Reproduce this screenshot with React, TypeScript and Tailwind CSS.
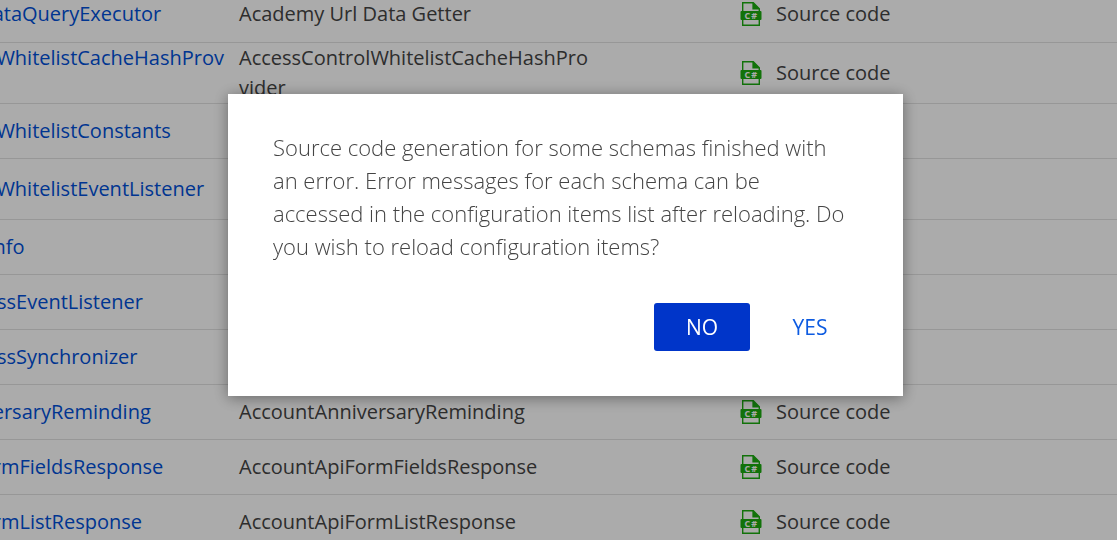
type Schema = { name: string; title: string };

const schemas: Schema[] = [
  { name: "AcademyUrlDataQueryExecutor", title: "Academy Url Data Getter" },
  { name: "AccessControlWhitelistCacheHashProvider", title: "AccessControlWhitelistCacheHashProvider" },
  { name: "AccessControlWhitelistConstants", title: "AccessControlWhitelistConstants" },
  { name: "AccessControlWhitelistEventListener", title: "Access Control Whitelist Event Listener" },
  { name: "AccessObjectInfo", title: "AccessObjectInfo" },
  { name: "AccountAddressEventListener", title: "AccountAddressEventListener" },
  { name: "AccountAddressSynchronizer", title: "AccountAddressSynchronizer" },
  { name: "AccountAnniversaryReminding", title: "AccountAnniversaryReminding" },
  { name: "AccountApiFormFieldsResponse", title: "AccountApiFormFieldsResponse" },
  { name: "AccountApiFormListResponse", title: "AccountApiFormListResponse" },
];

function CSharpFileIcon() {
  return (
    <svg viewBox="0 0 22 24" className="h-6 w-[22px] shrink-0" aria-hidden="true">
      <path d="M2.7 0.7h10.6l6 6v16.6H2.7z" fill="none" stroke="#1bab10" strokeWidth="1.4" />
      <path d="M12.4 0L20 7.6h-7.6z" fill="#1bab10" />
      <rect x="0.5" y="9" width="21" height="9" rx="1" fill="#1bab10" />
      <g fontSize="9" fontWeight="700" fill="#fff" fontFamily="Open Sans, sans-serif">
        <text x="4.6" y="16.8">C</text>
        <text x="11.2" y="16.8">#</text>
      </g>
    </svg>
  );
}

function SchemaTable() {
  return (
    <table className="-mt-[13px] -ml-[139px] w-[calc(100%+139px)] table-fixed border-collapse text-[20px] leading-[30px] text-[#444444]">
      <colgroup>
        <col className="w-[367px]" />
        <col className="w-[501px]" />
        <col />
      </colgroup>
      <tbody>
        {schemas.map((schema) => (
          <tr key={schema.name} className="h-[55px] border-b border-[#e2e2e2]">
            <td className="py-0 pr-1 pl-1 break-all">
              <a href="#schema" className="text-[#0050d8]">{schema.name}</a>
            </td>
            <td className="py-0 pr-[138px] pl-[11px] break-all">{schema.title}</td>
            <td className="py-0 pl-[11px]">
              <div className="flex items-center gap-3.5">
                <CSharpFileIcon />
                <span>Source code</span>
              </div>
            </td>
          </tr>
        ))}
      </tbody>
    </table>
  );
}

export default function App() {
  return (
    <div className="h-screen overflow-hidden bg-white font-['Open_Sans',sans-serif]">
      <SchemaTable />
      <div className="fixed inset-0 flex items-start justify-center bg-black/33 pt-[94px] pl-3.5">
        <div
          role="dialog"
          aria-modal="true"
          aria-describedby="dialog-message"
          className="w-full max-w-[675px] bg-white px-[45px] pt-[37px] pb-[45px] shadow-[0_2px_14px_rgba(0,0,0,0.4)]"
        >
          <p id="dialog-message" className="pr-2 text-[22px] leading-[33px] font-light text-[#444444]">
            Source code generation for some schemas finished with an error. Error messages for each schema can be
            accessed in the configuration items list after reloading. Do you wish to reload configuration items?
          </p>
          <div className="mt-10 flex justify-end gap-3 text-[21px]">
            <button type="button" className="h-12 w-24 rounded-[3px] bg-[#0035c9] pt-0.5 font-medium text-white">
              NO
            </button>
            <button type="button" className="h-12 w-24 rounded-[3px] pt-0.5 text-[#0d5be1]">
              YES
            </button>
          </div>
        </div>
      </div>
    </div>
  );
}
